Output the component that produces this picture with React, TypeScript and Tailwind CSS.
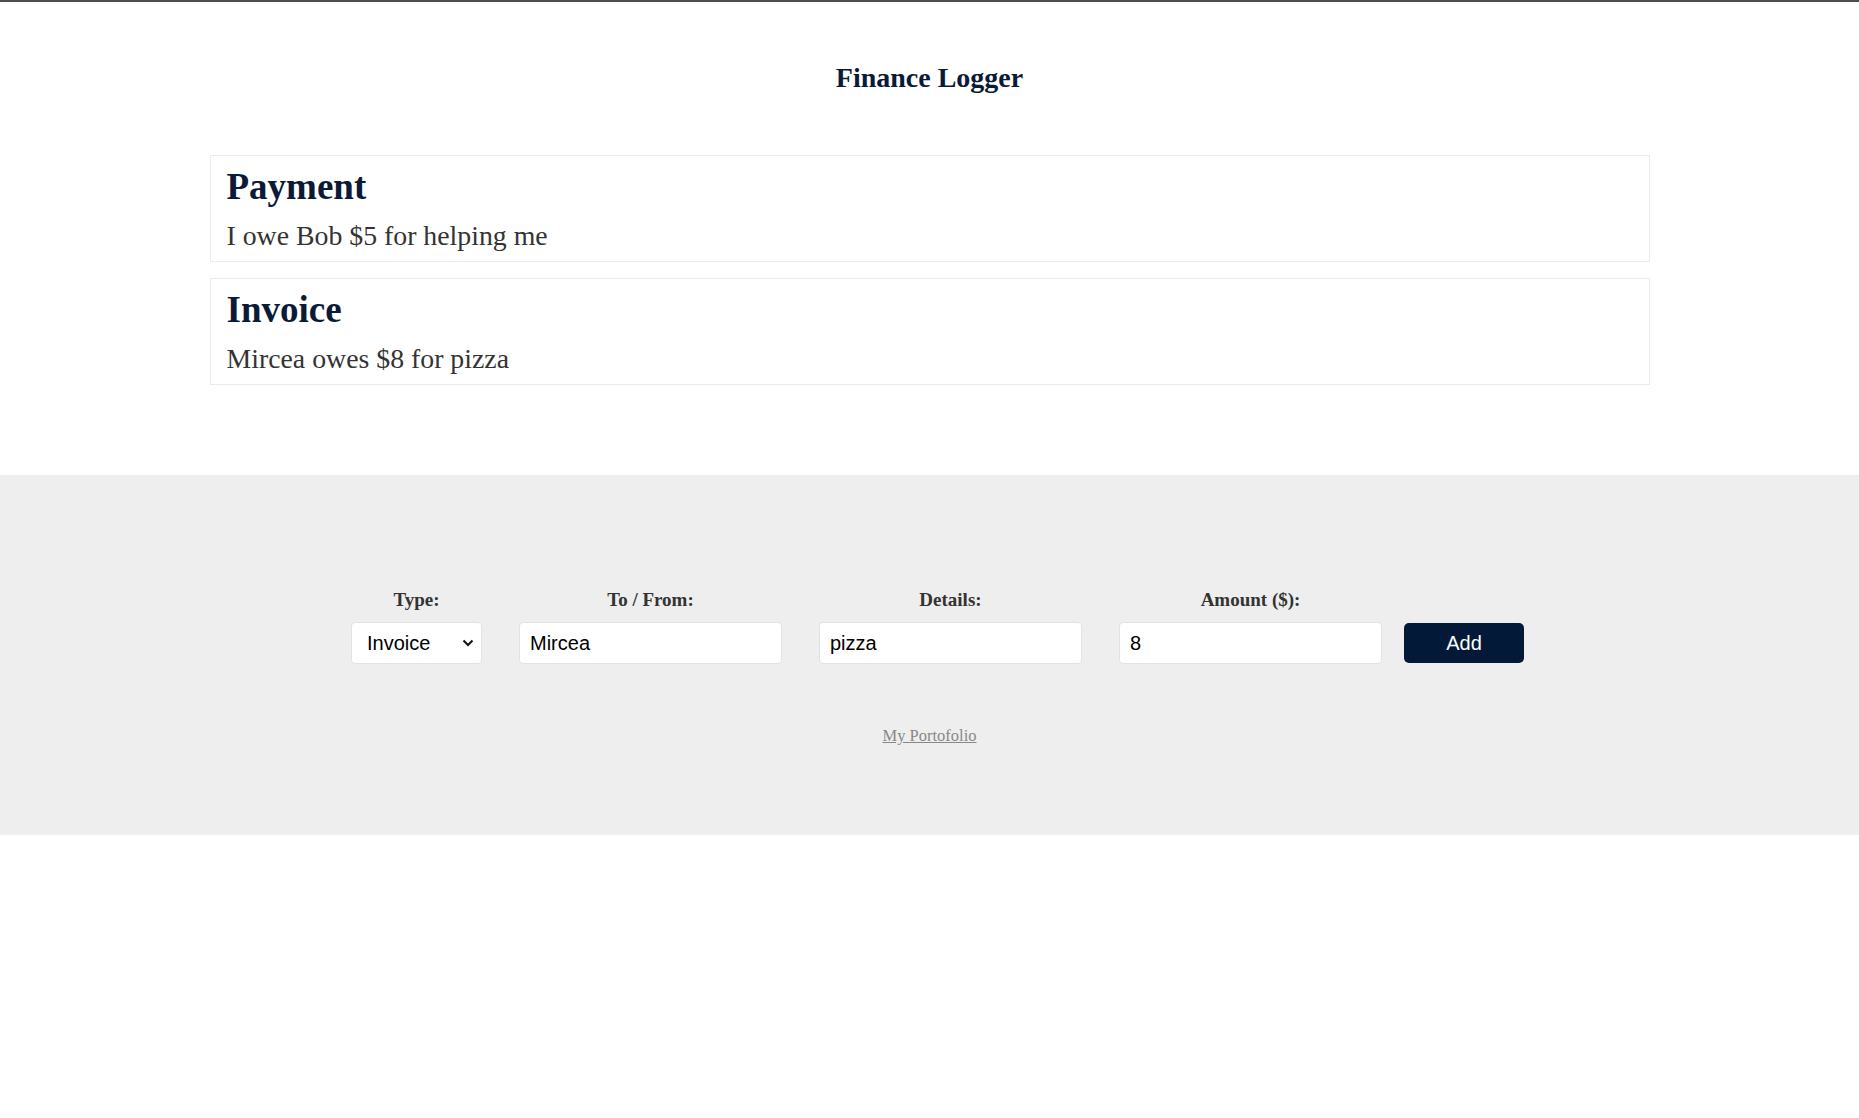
import React from "react";

const serif = { fontFamily: '"Liberation Serif", "Times New Roman", serif' };

export default function App() {
  return (
    <div className="min-h-[1118px] bg-white" style={serif}>
      <div className="h-[2px] bg-[#4d4d4d]" />
      <header className="pt-[60px] pb-[61px] text-center">
        <h1 className="text-[28px] leading-[32px] font-bold text-[#0b1a36]">Finance Logger</h1>
      </header>
      <main className="mx-auto w-[1440px] flex flex-col gap-4">
        {[
          { t: "Payment", d: "I owe Bob $5 for helping me" },
          { t: "Invoice", d: "Mircea owes $8 for pizza" },
        ].map((c) => (
          <div key={c.t} className="border border-[#ebebeb] pl-4 pr-4 pt-[10px] pb-[9px]">
            <h2 className="text-[37px] leading-[41px] font-bold text-[#0b1a36]">{c.t}</h2>
            <p className="mt-[13px] text-[27.8px] leading-[32px] text-[#333333]">{c.d}</p>
          </div>
        ))}
      </main>
      <section className="mt-[90px] h-[360px] bg-[#eeeeee] pt-[114px]">
        <form className="ml-[16px] flex items-end justify-center" onSubmit={(e) => e.preventDefault()}>
          <div className="flex flex-col items-center">
            <label className="mb-3 text-[19px] leading-[21px] font-bold text-[#333333]">Type:</label>
            <div className="relative">
              <select
                defaultValue="invoice"
                className="h-[42px] w-[131px] appearance-none rounded-[4px] border border-[#e2e2e2] bg-white pl-[15px] text-[20px] text-black outline-none"
                style={{ fontFamily: '"Liberation Sans", Arial, sans-serif' }}
              >
                <option value="invoice">Invoice</option>
                <option value="payment">Payment</option>
              </select>
              <svg className="pointer-events-none absolute right-[8px] top-[17px]" width="12" height="8" viewBox="0 0 12 8">
                <path d="M1.5 1.5 L6 6 L10.5 1.5" fill="none" stroke="#111" strokeWidth="2" />
              </svg>
            </div>
          </div>
          {[
            { l: "To / From:", v: "Mircea" },
            { l: "Details:", v: "pizza" },
            { l: "Amount ($):", v: "8" },
          ].map((f) => (
            <div key={f.l} className="ml-[37px] flex flex-col items-center">
              <label className="mb-3 text-[19px] leading-[21px] font-bold text-[#333333]">{f.l}</label>
              <input
                defaultValue={f.v}
                className="h-[42px] w-[263px] rounded-[4px] border border-[#e2e2e2] bg-white pl-[10px] text-[20px] text-black outline-none"
                style={{ fontFamily: '"Liberation Sans", Arial, sans-serif' }}
              />
            </div>
          ))}
          <button
            type="submit"
            className="mb-[1px] ml-[22px] h-[40px] w-[120px] rounded-[5px] bg-[#021a38] text-[20px] text-white"
            style={{ fontFamily: '"Liberation Sans", Arial, sans-serif' }}
          >
            Add
          </button>
        </form>
        <div className="mt-[60px] text-center">
          <a href="#" className="text-[16.5px] leading-[20px] text-[#888888] underline">
            My Portofolio
          </a>
        </div>
      </section>
    </div>
  );
}
